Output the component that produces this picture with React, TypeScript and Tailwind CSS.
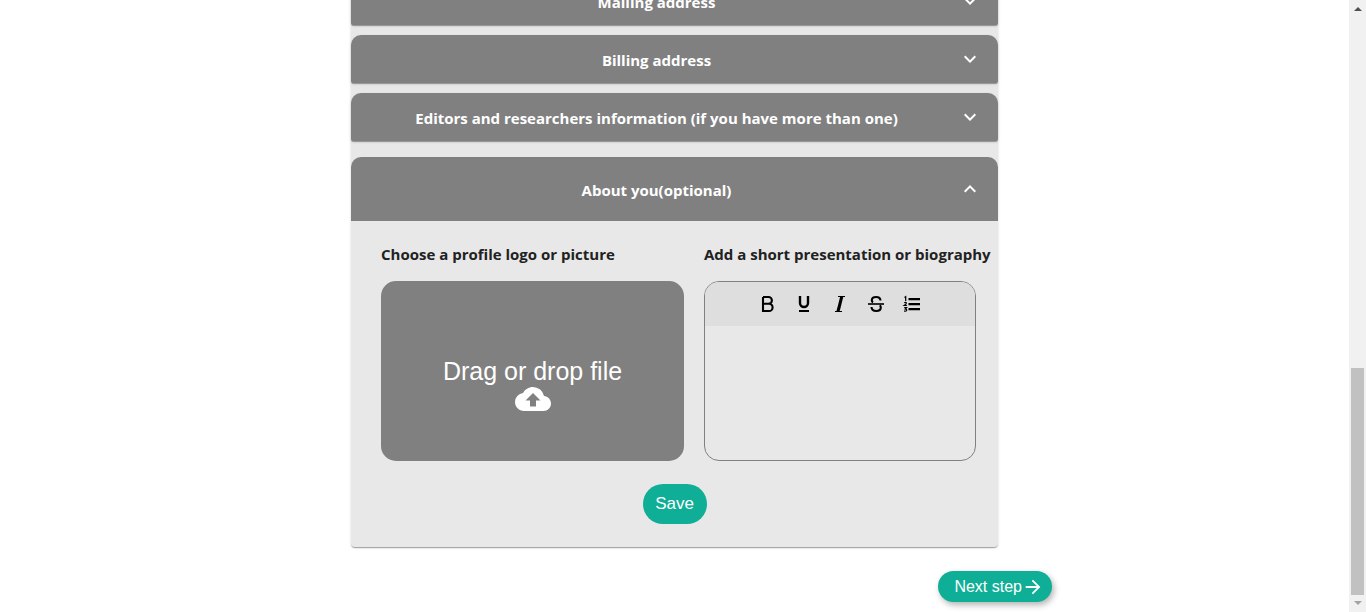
import type { ReactNode } from 'react';
import { MdArrowForward, MdCloudUpload, MdExpandLess, MdExpandMore } from 'react-icons/md';

const closedSections = [
  'Mailing address',
  'Billing address',
  'Editors and researchers information (if you have more than one)',
];

const tools: { label: string; icon: ReactNode }[] = [
  {
    label: 'Bold',
    icon: (
      <path d="M5 3h5.500a3.400 3.400 0 0 1 0 6.800H5M5 9.800h6a3.600 3.600 0 0 1 0 7.200H5V3" fill="none" stroke="currentColor" strokeWidth="2.100" />
    ),
  },
  {
    label: 'Underline',
    icon: (
      <>
        <path d="M6 2v7a4 4 0 0 0 8 0V2" fill="none" stroke="currentColor" strokeWidth="2.400" />
        <path d="M5 16h10v2H5z" />
      </>
    ),
  },
  {
    label: 'Italic',
    icon: (
      <>
        <path d="M8 2h7v1H8zM5 17h7v1H5z" />
        <path d="M10.200 2.500h3.200l-3.800 15H6.400z" />
      </>
    ),
  },
  {
    label: 'Strikethrough',
    icon: (
      <>
        <path d="M14.500 6.500C14.300 4 12.300 3 10.200 3 7.600 3 5.800 4.200 5.800 6.200c0 1 .4 1.800 1.200 2.300M13.800 11.200c.7 .6 1 1.300 1 2.300 0 2.200-2 3.500-4.500 3.500-2.700 0-4.700-1.300-4.800-4" fill="none" stroke="currentColor" strokeWidth="2.100" />
        <path d="M2 9h16v2H2z" fill="#2a2a2a" />
      </>
    ),
  },
  {
    label: 'Ordered list',
    icon: (
      <>
        <path d="M6.500 4H18v2.200H6.500zM6.500 9H18v2.200H6.500zM6.500 14H18v2.200H6.500z" />
        <path d="M2.500 3.400l1.200-.8V7M2.200 8.800q1.400-1 2.200 0 .2 .9-2.200 2.700h2.700M2.200 13.600h2.400l-1.200 1.500q1.700 0 1.200 1.600-.9 1-2.500 .2" fill="none" stroke="currentColor" strokeWidth="1.200" />
      </>
    ),
  },
];

function Scrollbar() {
  return (
    <div aria-hidden="true" className="sticky top-0 flex h-screen w-[17px] shrink-0 flex-col items-center justify-between bg-[#f1f1f1] py-1.5">
      <svg viewBox="0 0 8 4" className="mt-px h-1 w-2 fill-[#505050]"><path d="M4 0l4 4H0z" /></svg>
      <div className="flex w-full grow flex-col justify-end px-0.5 pb-1.5">
        <div className="h-[227px] bg-[#c1c1c1]" />
      </div>
      <svg viewBox="0 0 8 4" className="mb-px h-1 w-2 fill-[#a3a3a3]"><path d="M0 0h8L4 4z" /></svg>
    </div>
  );
}

export default function App() {
  return (
    <div className="flex min-h-screen bg-white font-['Liberation_Sans',Arial,sans-serif] text-[#212121]">
      <main className="flex min-w-0 flex-1 justify-center overflow-hidden">
        <div className="-mt-[23px] w-full max-w-[755px]">
          <div className="mx-auto w-full max-w-[647px] rounded-b bg-[#e8e8e8] font-['Open_Sans','Noto_Sans',sans-serif] text-[15px] font-bold shadow-[0_2px_1px_-1px_rgba(0,0,0,0.2),0_1px_1px_0_rgba(0,0,0,0.14),0_1px_3px_0_rgba(0,0,0,0.12)]">
            <div className="flex flex-col gap-2.5">
              {closedSections.map((title) => (
                <button
                  key={title}
                  type="button"
                  aria-expanded="false"
                  className="flex h-12 w-full items-center gap-3 rounded-t-[10px] rounded-b-xs bg-[#808080] px-4 text-white shadow-[0_2px_1px_-1px_rgba(0,0,0,0.2),0_1px_1px_0_rgba(0,0,0,0.14),0_1px_3px_0_rgba(0,0,0,0.12)]"
                >
                  <span className="flex-1 pt-[3px] text-center">{title}</span>
                  <MdExpandMore className="size-6" />
                </button>
              ))}
            </div>
            <section className="mt-4">
              <button type="button" aria-expanded="true" className="flex h-16 w-full items-center gap-3 rounded-t-[10px] bg-[#808080] px-4 text-white">
                <span className="flex-1 pt-[3px] text-center">About you(optional)</span>
                <MdExpandLess className="size-6" />
              </button>
              <div className="grid grid-cols-[303px_272px] gap-x-5 pt-[21px] pl-[30px]">
                <div>
                  <h2 className="h-[39px] leading-6 whitespace-nowrap">Choose a profile logo or picture</h2>
                  <label className="flex h-[180px] cursor-pointer flex-col items-center justify-center rounded-[15px] bg-[#808080] pt-8 font-['Liberation_Sans',Arial,sans-serif] text-[25px] leading-7 font-normal text-white">
                    Drag or drop file
                    <MdCloudUpload className="-mt-1 size-9" />
                    <input type="file" className="sr-only" />
                  </label>
                </div>
                <div>
                  <h2 id="biography" className="h-[39px] leading-6 whitespace-nowrap">Add a short presentation or biography</h2>
                  <div className="flex h-[180px] flex-col overflow-hidden rounded-[15px] border border-[#808080]">
                    <div className="flex h-11 shrink-0 items-center justify-center gap-4 bg-[#dedede] text-black">
                      {tools.map(({ label, icon }) => (
                        <button key={label} type="button" aria-label={label}>
                          <svg viewBox="0 0 20 20" className="size-5 fill-current">{icon}</svg>
                        </button>
                      ))}
                    </div>
                    <textarea aria-labelledby="biography" className="w-full flex-1 resize-none p-3 font-normal outline-none" />
                  </div>
                </div>
              </div>
              <div className="flex justify-center pt-[23px] pb-[23px]">
                <button type="button" className="h-10 w-16 rounded-full bg-[#0fae96] font-['Liberation_Sans',Arial,sans-serif] text-[17px] font-normal text-white">Save</button>
              </div>
            </section>
          </div>
          <div className="flex justify-end pt-6 pb-2.5">
            <button type="button" className="flex h-[31px] items-center rounded-full bg-[#0fae96] pr-2 pl-4 text-base text-white shadow-[2px_3px_6px_rgba(0,0,0,0.3)]">
              Next step
              <MdArrowForward className="size-[22px]" />
            </button>
          </div>
        </div>
      </main>
      <Scrollbar />
    </div>
  );
}
